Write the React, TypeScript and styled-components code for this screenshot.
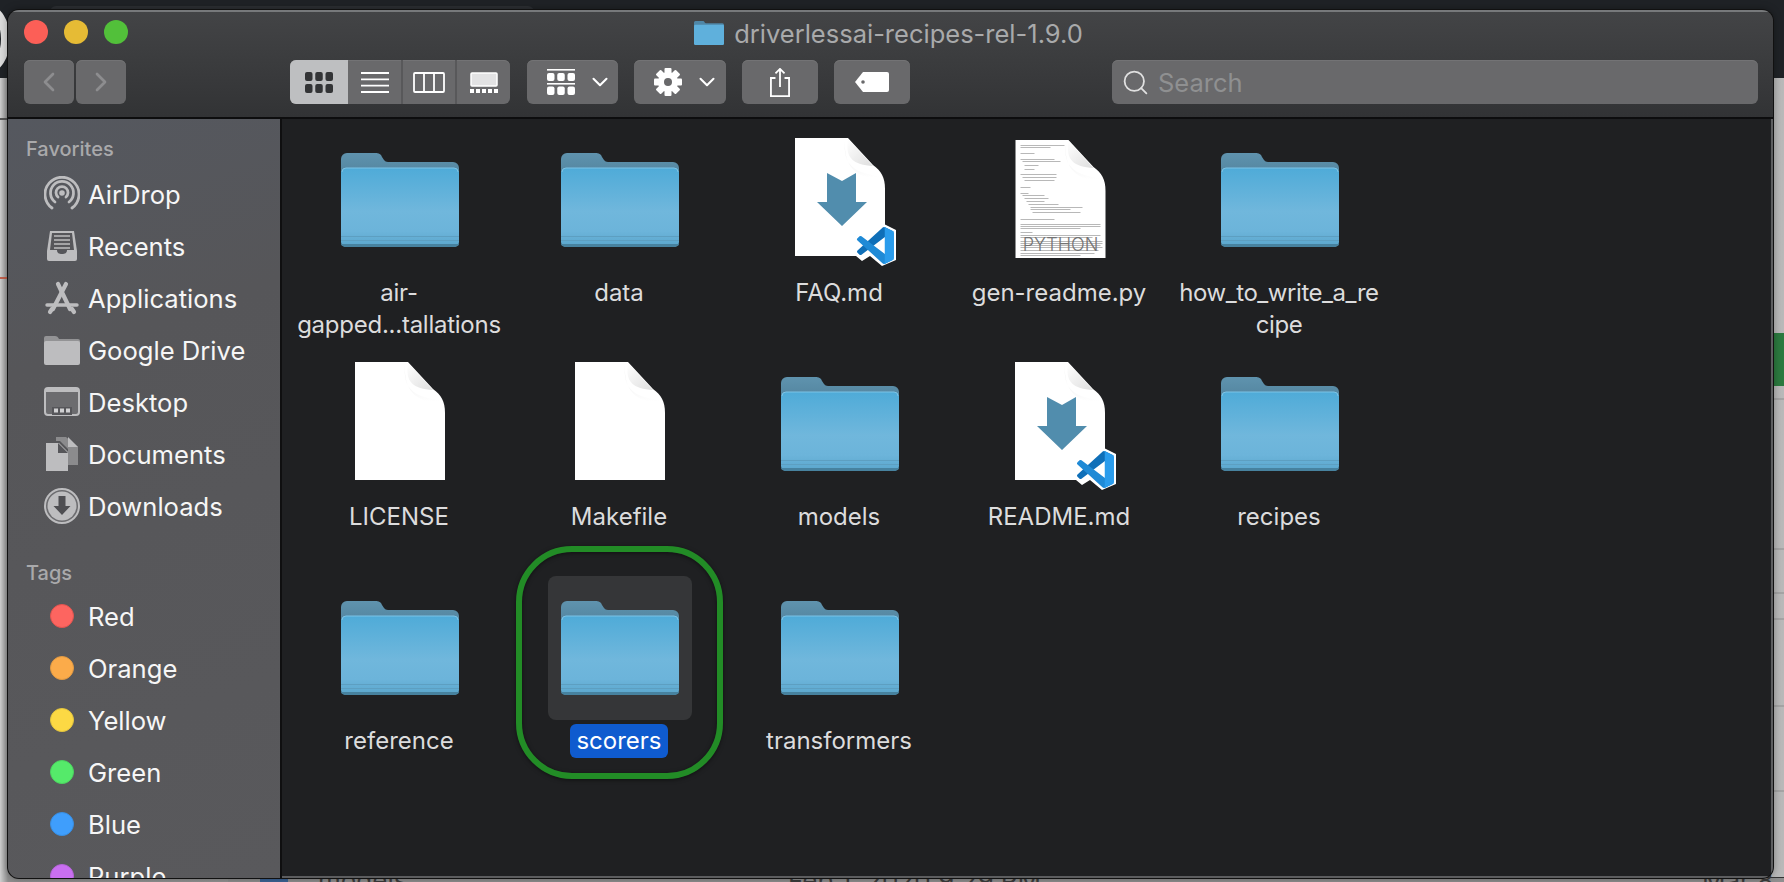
import styled, { createGlobalStyle } from "styled-components";
import { ChevronLeft, ChevronRight, ChevronDown, Search as SearchIcon } from "lucide-react";

const GlobalStyle = createGlobalStyle`
  html, body {
    margin: 0;
    padding: 0;
    height: 882px;
    overflow: hidden;
    background: #b9b9b9;
    font-family: Inter, "Liberation Sans", sans-serif;
  }
`;

const Page = styled.div`
  position: relative;
  width: 1784px;
  height: 882px;
  box-sizing: border-box;
  padding: 10px 11px 4px 8px;
  overflow: hidden;
  background: linear-gradient(90deg, #cfcfcf 0, #8f8f8f 8px, #b9b9b9 100%);
`;

const TopStrip = styled.div`
  position: absolute;
  left: 0;
  top: 0;
  width: 100%;
  height: 78px;
  background: #1f2226;
`;

const BehindTab = styled.div`
  position: absolute;
  left: 50px;
  top: 6px;
  width: 484px;
  height: 12px;
  border-radius: 6px 6px 0 0;
  background: #2c2f33;
`;

const LogoRing = styled.div`
  position: absolute;
  left: -34px;
  top: 5px;
  width: 44px;
  height: 68px;
  box-sizing: border-box;
  border: 9px solid #dcdcdc;
  border-radius: 50%;
`;

const EdgeLine = styled.div<{ $top: number; $color: string; $left: number; $w: number }>`
  position: absolute;
  left: ${(p) => p.$left}px;
  top: ${(p) => p.$top}px;
  width: ${(p) => p.$w}px;
  height: 2px;
  background: ${(p) => p.$color};
`;

const GreenSliver = styled.div`
  position: absolute;
  right: 0;
  top: 333px;
  width: 10px;
  height: 53px;
  background: #2b7a3f;
`;

const BottomBar = styled.div`
  position: absolute;
  left: 228px;
  right: 0;
  bottom: 0;
  height: 4px;
  background: #8f8f8f;
  border-top: 1px solid #333;
`;

const BlueSquare = styled.div`
  position: absolute;
  left: 260px;
  bottom: 0;
  width: 28px;
  height: 5px;
  background: #3c6496;
`;

const BottomText = styled.div<{ $left: number }>`
  position: absolute;
  left: ${(p) => p.$left}px;
  bottom: -12px;
  font-size: 26px;
  line-height: 26px;
  color: #3c3c3c;
  white-space: nowrap;
`;

const Window = styled.div`
  position: relative;
  width: 100%;
  height: 100%;
  display: flex;
  flex-direction: column;
  border-radius: 11px;
  overflow: hidden;
  box-shadow: 0 0 0 1px #111, 0 0 8px rgba(0, 0, 0, 0.4);
  background: #1f2022;
`;

const Toolbar = styled.div`
  height: 109px;
  flex: none;
  box-sizing: border-box;
  border-top: 2px solid #77797b;
  border-bottom: 2px solid #0d0d0e;
  background: linear-gradient(180deg, #434446 0, #323335 100%);
  display: flex;
  flex-direction: column;
`;

const TitleRow = styled.div`
  position: relative;
  height: 48px;
  flex: none;
  box-sizing: border-box;
  padding: 0 4px 6px 0;
  display: flex;
  align-items: center;
  justify-content: center;
  gap: 10px;
`;

const Lights = styled.div`
  position: absolute;
  left: 16px;
  top: 8px;
  display: flex;
  gap: 16px;
`;

const Light = styled.span<{ $color: string }>`
  width: 24px;
  height: 24px;
  border-radius: 50%;
  background: ${(p) => p.$color};
`;

const Title = styled.span`
  font-size: 25.5px;
  color: #a9aaab;
`;

const Tools = styled.div`
  display: flex;
  align-items: flex-start;
  padding-left: 16px;
`;

const Btn = styled.div<{ $w: number; $ml?: number }>`
  width: ${(p) => p.$w}px;
  height: 44px;
  margin-left: ${(p) => p.$ml ?? 0}px;
  flex: none;
  box-sizing: border-box;
  border-radius: 6px;
  background: #69696b;
  box-shadow: inset 0 1px 0 #737375;
  display: flex;
  align-items: center;
  justify-content: center;
  color: #fff;
`;

const MenuBtn = styled(Btn)`
  justify-content: flex-start;
  padding-left: 20px;
  gap: 12px;
`;

const ViewGroup = styled.div`
  display: flex;
  margin-left: 164px;
  height: 44px;
  border-radius: 6px;
  overflow: hidden;
  background: #69696b;
  box-shadow: inset 0 1px 0 #737375;
`;

const ViewBtn = styled.div<{ $w: number; $active?: boolean; $sep?: boolean }>`
  width: ${(p) => p.$w}px;
  display: flex;
  align-items: center;
  justify-content: center;
  box-sizing: border-box;
  background: ${(p) => (p.$active ? "#bebfc1" : "transparent")};
  border-left: ${(p) => (p.$sep ? "2px solid #58585a" : "none")};
`;

const SearchBox = styled.div`
  width: 646px;
  height: 44px;
  margin-left: 202px;
  flex: none;
  box-sizing: border-box;
  border-radius: 6px;
  background: #69696b;
  box-shadow: inset 0 1px 0 #737375;
  display: flex;
  align-items: center;
  gap: 8px;
  padding-left: 9px;
  color: #e0e0e0;
`;

const SearchText = styled.span`
  font-size: 25.5px;
  color: #8f9091;
`;

const Body = styled.div`
  flex: 1;
  display: flex;
  min-height: 0;
`;

const Sidebar = styled.div`
  width: 274px;
  flex: none;
  box-sizing: border-box;
  padding-left: 18px;
  overflow: hidden;
  background: linear-gradient(160deg, #55585f 0, #565659 30%, #59595c 100%);
  border-right: 2px solid #0f0f10;
`;

const SectionHead = styled.div<{ $mt: number; $mb: number }>`
  height: 32px;
  margin: ${(p) => p.$mt}px 0 ${(p) => p.$mb}px 0;
  display: flex;
  align-items: center;
  font-size: 20px;
  font-weight: 500;
  color: #a9a9ab;
`;

const NavItem = styled.div`
  height: 52px;
  display: flex;
  align-items: center;
  padding-left: 18px;
  gap: 8px;
  font-size: 25.6px;
  color: #f6f6f6;
  white-space: nowrap;
`;

const IconSlot = styled.span`
  width: 36px;
  height: 36px;
  flex: none;
  display: flex;
  align-items: center;
  justify-content: center;
`;

const Dot = styled.span<{ $color: string; $edge: string }>`
  width: 24px;
  height: 24px;
  border-radius: 50%;
  box-sizing: border-box;
  background: ${(p) => p.$color};
  border: 1.5px solid ${(p) => p.$edge};
`;

const Main = styled.div`
  position: relative;
  flex: 1;
  min-width: 0;
  box-sizing: border-box;
  padding: 9px 0 0 8px;
  display: grid;
  grid-template-columns: repeat(5, 220px);
  grid-auto-rows: 224px;
  background: #1f2022;
  border-bottom: 2px solid #5c5d5f;
  border-right: 2px solid #5c5d5f;
`;

const Cell = styled.div`
  display: flex;
  flex-direction: column;
  align-items: center;
`;

const IconBox = styled.div<{ $selected?: boolean }>`
  width: 144px;
  height: 144px;
  flex: none;
  border-radius: 8px;
  display: flex;
  align-items: center;
  justify-content: center;
  background: ${(p) => (p.$selected ? "#353638" : "transparent")};
`;

const Label = styled.div<{ $selected?: boolean; $spacing?: number }>`
  margin: 4px 2px 0 0;
  padding: 1px 6px;
  line-height: 32px;
  text-align: center;
  white-space: pre;
  font-size: 24px;
  letter-spacing: ${(p) => p.$spacing ?? 0}px;
  color: ${(p) => (p.$selected ? "#fff" : "#dcdcdd")};
  border-radius: 6px;
  box-sizing: border-box;
  background: ${(p) => (p.$selected ? "#0f5bcf" : "transparent")};
`;

const Callout = styled.div`
  position: absolute;
  left: 234px;
  top: 427px;
  width: 207px;
  height: 233px;
  box-sizing: border-box;
  border: 6px solid #228c26;
  border-radius: 56px;
  box-shadow: 0 1px 4px rgba(0, 0, 0, 0.5), inset 0 1px 4px rgba(0, 0, 0, 0.5);
  pointer-events: none;
`;

const FOLDER_BACK = "M0 6a6 6 0 0 1 6-6h28c4 0 6 1 7 4l2 3c1 1 2 2 4 2h65a6 6 0 0 1 6 6v14H0z";

const Folder = ({ id }: { id: string }) => (
  <svg width="118" height="94" viewBox="0 0 118 94">
    <defs>
      <linearGradient id={`face-${id}`} x1="0" y1="0" x2="0" y2="1">
        <stop offset="0" stopColor="#4fabd8" />
        <stop offset="0.55" stopColor="#70b7dc" />
        <stop offset="0.8" stopColor="#6cb4da" />
        <stop offset="1" stopColor="#5aa6cc" />
      </linearGradient>
      <linearGradient id={`back-${id}`} x1="0" y1="0" x2="0" y2="1">
        <stop offset="0" stopColor="#5f93ae" />
        <stop offset="1" stopColor="#4f7f99" />
      </linearGradient>
    </defs>
    <path d={FOLDER_BACK} fill={`url(#back-${id})`} />
    <rect y="15" width="118" height="79" rx="5" fill={`url(#face-${id})`} />
    <path d="M1 19a4 4 0 0 1 4-4h108a4 4 0 0 1 4 4" fill="none" stroke="#7cc3e6" />
    <rect y="83" width="118" height="1" fill="#5d9fc1" />
    <rect y="87" width="118" height="1" fill="#5d9fc1" />
    <path d="M0 91h118a5 3 0 0 1-5 3H5a5 3 0 0 1-5-3z" fill="#47829f" />
  </svg>
);

const SmallFolder = () => (
  <svg width="30" height="24" viewBox="0 0 118 94">
    <path d={FOLDER_BACK} fill="#4f86a6" />
    <rect y="15" width="118" height="79" rx="5" fill="#5fb0dc" />
  </svg>
);

const DOC_BODY = "M0 0h53l25 27c8 6 12 12 12 24v67H0z";
const DOC_FOLD = "M53 1c-3 19 5 26 25 27z";

const DocDefs = ({ id }: { id: string }) => (
  <defs>
    <linearGradient id={`fold-${id}`} x1="0" y1="0" x2="1" y2="1">
      <stop offset="0" stopColor="#ffffff" />
      <stop offset="1" stopColor="#dedede" />
    </linearGradient>
    <linearGradient id={`shade-${id}`} x1="0" y1="0" x2="0" y2="1">
      <stop offset="0" stopColor="#d8d8d8" />
      <stop offset="1" stopColor="#ffffff" />
    </linearGradient>
  </defs>
);

const DocSheet = ({ id }: { id: string }) => (
  <>
    <DocDefs id={id} />
    <path d={DOC_BODY} fill="#fff" />
    <path d="M50 3c-2 24 8 32 38 36-20 4-40-6-38-36z" fill={`url(#shade-${id})`} opacity="0.6" />
    <path d={DOC_FOLD} fill={`url(#fold-${id})`} />
  </>
);

const BlankDoc = ({ id }: { id: string }) => (
  <svg width="90" height="124" viewBox="0 0 90 124">
    <DocSheet id={id} />
  </svg>
);

const MarkdownDoc = ({ id }: { id: string }) => (
  <svg width="90" height="124" viewBox="0 0 90 124" overflow="visible">
    <DocSheet id={id} />
    <path d="M32 35l15 8 14-8v29h11L47 88 22 64h10z" fill="#518dad" />
    <path d="M87 85l14 7v30l-14 6-12-10-8 5-6-5 8-8-8-8 6-5 8 5z" fill="#fff" />
    <g transform="translate(62 89) scale(0.37)">
      <path
        d="M96.46 10.8L75.86.87a6.23 6.23 0 0 0-7.1 1.2L1.34 63.6a4.17 4.17 0 0 0 0 6.16l5.51 5a4.16 4.16 0 0 0 5.32.24l81.2-61.6c2.72-2.07 6.64-.13 6.64 3.28v-.24a6.25 6.25 0 0 0-3.55-5.64z"
        fill="#0f6fb8"
      />
      <path
        d="M96.46 89.2L75.86 99.13a6.23 6.23 0 0 1-7.1-1.2L1.34 36.4a4.17 4.17 0 0 1 0-6.16l5.51-5a4.16 4.16 0 0 1 5.32-.24l81.2 61.6c2.72 2.07 6.64.13 6.64-3.28v.24a6.25 6.25 0 0 1-3.55 5.64z"
        fill="#1f8ad6"
      />
      <path
        d="M75.86 99.13a6.23 6.23 0 0 1-7.11-1.2c2.3 2.3 6.25.67 6.25-2.6V4.67c0-3.27-3.95-4.9-6.25-2.6a6.23 6.23 0 0 1 7.11-1.2L96.46 10.8A6.25 6.25 0 0 1 100 16.44v67.12a6.25 6.25 0 0 1-3.54 5.64z"
        fill="#2a9cec"
      />
    </g>
  </svg>
);

// tiny source listing on the python thumbnail: [x, y, width]
const codeLines = [
  [5, 5, 44], [5, 7, 30], [5, 13, 14], [5, 19, 34], [7, 21, 38], [9, 25, 14], [9, 29, 10], [5, 34, 36],
  [7, 37, 34], [9, 40, 30], [5, 47, 10], [5, 53, 8], [7, 55, 22], [9, 58, 24], [11, 61, 18], [13, 64, 30],
  [15, 67, 52], [15, 69, 40], [17, 72, 48], [5, 79, 34], [5, 84, 80], [5, 86, 80], [5, 88, 60], [5, 92, 12],
  [5, 95, 80], [5, 97, 72], [5, 101, 82], [5, 103, 82], [5, 105, 80], [5, 107, 82], [5, 110, 78], [5, 113, 74],
  [5, 115, 60],
];

const PythonDoc = ({ id }: { id: string }) => (
  <svg width="91" height="124" viewBox="0 0 90 124">
    <g transform="translate(0 2)">
      <DocSheet id={id} />
      {codeLines.map(([x, y, w]) => (
        <rect key={`${x}-${y}`} x={x} y={y} width={w} height="0.7" fill="#9a9a9a" />
      ))}
      <text x="45" y="111" textAnchor="middle" fontSize="18" fill="#737373" fontFamily="Inter, sans-serif" fontWeight="300">
        PYTHON
      </text>
    </g>
  </svg>
);

const AirDropIcon = () => (
  <svg width="36" height="36" viewBox="0 0 36 36" fill="none" stroke="#bdbdbf" strokeWidth="2.8" strokeLinecap="round">
    <path d="M8 32A17 17 0 1 1 28 32" />
    <path d="M11 26A11.5 11.5 0 1 1 25 26" />
    <path d="M14 21A6 6 0 1 1 22 21" />
    <circle cx="18" cy="17" r="1.4" />
  </svg>
);

const RecentsIcon = () => (
  <svg width="32" height="32" viewBox="0 0 32 32">
    <path d="M4 1h24l3 20v8a2 2 0 0 1-2 2H3a2 2 0 0 1-2-2v-8z" fill="#bdbdbf" />
    <path d="M6 3h20l2 17h-7c0 3-2 4-5 4s-5-1-5-4H4z" fill="#56565a" />
    <path d="M8 6h16M8 10h16M8 14h16M8 18h16" stroke="#bdbdbf" strokeWidth="1.6" />
  </svg>
);

const AppsIcon = () => (
  <svg width="36" height="34" viewBox="0 0 36 34" fill="none" stroke="#bdbdbf" strokeWidth="4.2" strokeLinecap="round">
    <path d="M14 3l12 25" />
    <path d="M22 3L9 28" />
    <path d="M3 24h30" strokeWidth="3.4" />
    <path d="M6 31l2-3M30 31l-2-3" />
  </svg>
);

const DriveIcon = () => (
  <svg width="36" height="30" viewBox="0 0 36 30">
    <path d="M0 3a2 2 0 0 1 2-2h9c2 0 3 1 4 3h19a2 2 0 0 1 2 2v3H0z" fill="#939395" />
    <rect y="6" width="36" height="24" rx="2" fill="#bdbdbf" />
  </svg>
);

const DesktopIcon = () => (
  <svg width="36" height="30" viewBox="0 0 36 30">
    <rect x="1" y="1" width="34" height="27" rx="3" fill="#6c6c6f" stroke="#bdbdbf" strokeWidth="2" />
    <rect x="1" y="1" width="34" height="4" fill="#bdbdbf" />
    <rect x="8" y="20" width="20" height="8" fill="#56565a" />
    <rect x="10" y="21.5" width="4" height="4" fill="#cfcfd1" />
    <rect x="16" y="21.5" width="4" height="4" fill="#cfcfd1" />
    <rect x="22" y="21.5" width="4" height="4" fill="#cfcfd1" />
  </svg>
);

const DocumentsIcon = () => (
  <svg width="32" height="34" viewBox="0 0 32 34">
    <path d="M10 0h10l12 10v18H22V12L14 4h-4z" fill="#8b8b8d" />
    <path d="M22 0l10 10H22z" fill="#bdbdbf" />
    <path d="M0 6h13l9 9v19H0z" fill="#bdbdbf" />
    <path d="M12 6v10h10z" fill="#56565a" />
  </svg>
);

const DownloadsIcon = () => (
  <svg width="36" height="36" viewBox="0 0 36 36">
    <circle cx="18" cy="18" r="17" fill="#6c6c6f" stroke="#bdbdbf" strokeWidth="2" />
    <circle cx="18" cy="18" r="14.5" fill="#bdbdbf" />
    <path d="M14.5 8h7v10h5L18 27l-8.500-9h5z" fill="#4e4e52" />
  </svg>
);

const IconViewGlyph = ({ fill }: { fill: string }) => (
  <svg width="28" height="21" viewBox="0 0 28 21" fill={fill}>
    {[0, 10.25, 20.5].map((x) =>
      [0, 12].map((y) => <rect key={`${x}${y}`} x={x} y={y} width="7.500" height="9" rx="2" />)
    )}
  </svg>
);

const ListGlyph = () => (
  <svg width="28" height="21" viewBox="0 0 28 21" stroke="#fff" strokeWidth="1.8">
    <path d="M0 1h28M0 7.300h28M0 13.700h28M0 20h28" />
  </svg>
);

const ColumnGlyph = () => (
  <svg width="32" height="21" viewBox="0 0 32 21" fill="none" stroke="#fff" strokeWidth="1.800">
    <rect x="1" y="1" width="30" height="19" rx="1" />
    <path d="M11 1v19M21 1v19" />
  </svg>
);

const GalleryGlyph = () => (
  <svg width="28" height="21" viewBox="0 0 28 21">
    <rect x="1" y="1" width="26" height="13" rx="1" fill="#e2e2e3" stroke="#fff" strokeWidth="1.500" />
    {[0, 6, 12, 18, 24].map((x) => (
      <rect key={x} x={x} y="17" width="4" height="4" fill="#fff" />
    ))}
  </svg>
);

const GroupGlyph = () => (
  <svg width="28" height="26" viewBox="0 0 28 26" fill="#fff" style={{ flex: "none" }}>
    <rect y="0" width="28" height="1.600" />
    <rect y="14" width="28" height="1.600" />
    {[0, 10.25, 20.5].map((x) => (
      <g key={x}>
        <rect x={x} y="4" width="7.500" height="8" rx="2" />
        <rect x={x} y="17.500" width="7.500" height="8.500" rx="2" />
      </g>
    ))}
  </svg>
);

const GearGlyph = () => (
  <svg width="28" height="28" viewBox="0 0 28 28" style={{ flex: "none" }}>
    <g fill="#fff">
      {[0, 45, 90, 135, 180, 225, 270, 315].map((a) => (
        <rect key={a} x="10.500" y="0" width="7" height="8" rx="1" transform={`rotate(${a} 14 14)`} />
      ))}
      <circle cx="14" cy="14" r="10" />
    </g>
    <circle cx="14" cy="14" r="4" fill="#69696b" />
  </svg>
);

const ShareGlyph = () => (
  <svg width="22" height="29" viewBox="0 0 24 32" fill="none" stroke="#fff" strokeWidth="2">
    <path d="M7 11H2v20h20V11h-5" />
    <path d="M12 21V1M7 6l5-5 5 5" />
  </svg>
);

const TagGlyph = () => (
  <svg width="34" height="20" viewBox="0 0 34 20">
    <path d="M8 0h24a2 2 0 0 1 2 2v16a2 2 0 0 1-2 2H8L0 10z" fill="#fff" />
    <circle cx="8" cy="10" r="1.800" fill="#69696b" />
  </svg>
);

type FileKind = "folder" | "blank" | "markdown" | "python";

const files: { name: string; kind: FileKind; selected?: boolean; spacing?: number }[] = [
  { name: "air-\ngapped...tallations", kind: "folder", spacing: -0.25 },
  { name: "data", kind: "folder" },
  { name: "FAQ.md", kind: "markdown" },
  { name: "gen-readme.py", kind: "python" },
  { name: "how_to_write_a_re\ncipe", kind: "folder", spacing: -0.45 },
  { name: "LICENSE", kind: "blank" },
  { name: "Makefile", kind: "blank" },
  { name: "models", kind: "folder" },
  { name: "README.md", kind: "markdown" },
  { name: "recipes", kind: "folder" },
  { name: "reference", kind: "folder" },
  { name: "scorers", kind: "folder", selected: true },
  { name: "transformers", kind: "folder" },
];

const favorites = [
  { name: "AirDrop", icon: <AirDropIcon /> },
  { name: "Recents", icon: <RecentsIcon /> },
  { name: "Applications", icon: <AppsIcon /> },
  { name: "Google Drive", icon: <DriveIcon /> },
  { name: "Desktop", icon: <DesktopIcon /> },
  { name: "Documents", icon: <DocumentsIcon /> },
  { name: "Downloads", icon: <DownloadsIcon /> },
];

const tags = [
  { name: "Red", color: "#fd6560", edge: "#e2544f" },
  { name: "Orange", color: "#fbab4a", edge: "#e29a42" },
  { name: "Yellow", color: "#fcd944", edge: "#e2c43e" },
  { name: "Green", color: "#55ea6a", edge: "#4cd260" },
  { name: "Blue", color: "#3f9efc", edge: "#388ee2" },
  { name: "Purple", color: "#c96ff0", edge: "#b464d8" },
];

// bits of the page behind the window that peek out at its edges
const edgeLines = [
  { left: 0, w: 8, top: 118, color: "#555" },
  { left: 0, w: 8, top: 277, color: "#c0604c" },
  { left: 1774, w: 10, top: 398, color: "#a4a4a4" },
  { left: 1774, w: 10, top: 548, color: "#a4a4a4" },
  { left: 1774, w: 10, top: 592, color: "#a4a4a4" },
  { left: 1774, w: 10, top: 618, color: "#a4a4a4" },
  { left: 1774, w: 10, top: 705, color: "#a4a4a4" },
  { left: 1774, w: 10, top: 790, color: "#a4a4a4" },
];

const FileIcon = ({ kind, id }: { kind: FileKind; id: string }) => {
  if (kind === "folder") return <Folder id={id} />;
  if (kind === "blank") return <BlankDoc id={id} />;
  if (kind === "markdown") return <MarkdownDoc id={id} />;
  return <PythonDoc id={id} />;
};

const App = () => {
  return (
    <Page>
      <GlobalStyle />
      <TopStrip />
      <BehindTab />
      <LogoRing />
      <GreenSliver />
      {edgeLines.map((l) => (
        <EdgeLine key={`${l.left}-${l.top}`} $left={l.left} $w={l.w} $top={l.top} $color={l.color} />
      ))}
      <BottomBar />
      <BlueSquare />
      <BottomText $left={318}>models</BottomText>
      <BottomText $left={788}>Feb 1, 2020 9:29 PM</BottomText>
      <BottomText $left={1702}>Mar 8</BottomText>
      <Window>
        <Toolbar>
          <TitleRow>
            <Lights>
              <Light $color="#fc5f57" />
              <Light $color="#e6bb35" />
              <Light $color="#52c03a" />
            </Lights>
            <SmallFolder />
            <Title>driverlessai-recipes-rel-1.9.0</Title>
          </TitleRow>
          <Tools>
            <Btn $w={50}>
              <ChevronLeft size={32} color="#8d8d8f" strokeWidth={2} />
            </Btn>
            <Btn $w={50} $ml={2}>
              <ChevronRight size={32} color="#8d8d8f" strokeWidth={2} />
            </Btn>
            <ViewGroup>
              <ViewBtn $w={58} $active>
                <IconViewGlyph fill="#333436" />
              </ViewBtn>
              <ViewBtn $w={53}>
                <ListGlyph />
              </ViewBtn>
              <ViewBtn $w={54} $sep>
                <ColumnGlyph />
              </ViewBtn>
              <ViewBtn $w={55} $sep>
                <GalleryGlyph />
              </ViewBtn>
            </ViewGroup>
            <MenuBtn $w={91} $ml={17}>
              <GroupGlyph />
              <ChevronDown size={26} strokeWidth={1.9} style={{ flex: "none" }} />
            </MenuBtn>
            <MenuBtn $w={92} $ml={16}>
              <GearGlyph />
              <ChevronDown size={26} strokeWidth={1.9} style={{ flex: "none" }} />
            </MenuBtn>
            <Btn $w={76} $ml={16}>
              <ShareGlyph />
            </Btn>
            <Btn $w={76} $ml={16}>
              <TagGlyph />
            </Btn>
            <SearchBox>
              <SearchIcon size={29} strokeWidth={1.5} />
              <SearchText>Search</SearchText>
            </SearchBox>
          </Tools>
        </Toolbar>
        <Body>
          <Sidebar>
            <SectionHead $mt={14} $mb={3}>
              Favorites
            </SectionHead>
            {favorites.map((f) => (
              <NavItem key={f.name}>
                <IconSlot>{f.icon}</IconSlot>
                {f.name}
              </NavItem>
            ))}
            <SectionHead $mt={25} $mb={1}>
              Tags
            </SectionHead>
            {tags.map((t) => (
              <NavItem key={t.name}>
                <IconSlot>
                  <Dot $color={t.color} $edge={t.edge} />
                </IconSlot>
                {t.name}
              </NavItem>
            ))}
          </Sidebar>
          <Main>
            {files.map((f) => (
              <Cell key={f.name}>
                <IconBox $selected={f.selected}>
                  <FileIcon kind={f.kind} id={f.name.replace(/[^a-zA-Z]/g, "")} />
                </IconBox>
                <Label $selected={f.selected} $spacing={f.spacing}>
                  {f.name}
                </Label>
              </Cell>
            ))}
            <Callout />
          </Main>
        </Body>
      </Window>
    </Page>
  );
};

export default App;
